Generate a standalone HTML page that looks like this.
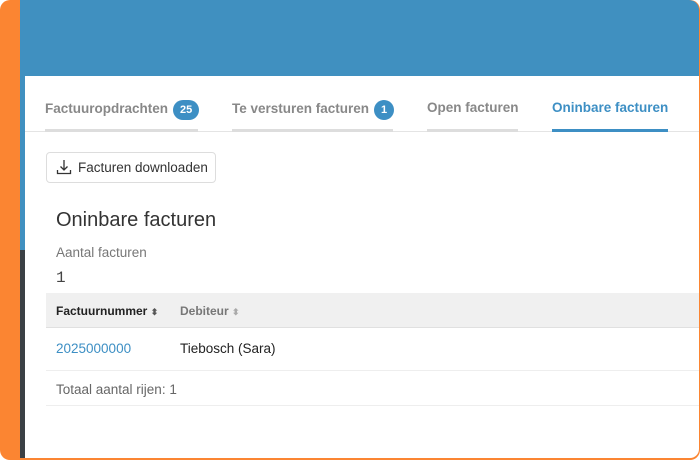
<!DOCTYPE html>
<html><head><style>
*{margin:0;padding:0;box-sizing:border-box}
body{width:700px;height:460px;background:#fff;font-family:"Liberation Sans",sans-serif;position:relative;overflow:hidden}
.frame{position:absolute;inset:0;background:#fb8532;border-radius:10px;overflow:hidden}
.blue{position:absolute;left:20px;top:0;right:1px;height:250px;background:#4090c0;border-top-right-radius:10px}
.dark{position:absolute;left:20px;top:250px;width:6px;bottom:2px;background:#3b4045}
.panel{position:absolute;left:25px;top:76px;right:1px;bottom:2px;background:#fff;border-bottom-right-radius:9px}
.tabs{position:absolute;left:0;top:0;right:0;height:56px;border-bottom:1px solid #e4e4e4}
.tab{position:absolute;top:0;height:56px;font-weight:bold;font-size:13.5px;color:#888;padding-top:24px;border-bottom:3px solid #ddd;white-space:nowrap}
.tab.act{color:#3d8fc4;border-bottom-color:#3d8fc4}
.badge{display:inline-block;background:#3d8fc4;color:#fff;border-radius:10px;font-size:11px;height:20px;line-height:20px;padding:0 7px;vertical-align:0;margin-left:5px}
.btn{position:absolute;left:21px;top:76px;width:170px;height:31px;border:1px solid #ddd;border-radius:4px;font-size:13.5px;color:#333;padding:7px 0 0 31px;white-space:nowrap}
.btn svg{position:absolute;left:9px;top:6px}
h1{position:absolute;left:31px;top:133px;font-size:20px;font-weight:normal;color:#333}
.lbl{position:absolute;left:31px;top:169px;font-size:13.5px;color:#777}
.num{position:absolute;left:31px;top:193px;font-size:16px;color:#444;font-family:"Liberation Mono",monospace}
.th{position:absolute;left:21px;right:0;top:217px;height:35px;background:#f0f0f0;border-bottom:1px solid #e0e0e0;font-size:12px;font-weight:bold}
.row{position:absolute;left:21px;right:0;top:252px;height:43px;border-bottom:1px solid #eee;font-size:13.5px}
.foot{position:absolute;left:21px;right:0;top:295px;height:35px;border-bottom:1px solid #eee;font-size:13.5px;color:#666}
.c{position:absolute;white-space:nowrap}
.s{color:#aaa;font-size:9px}
</style></head><body>
<div class="frame">
<div class="blue"></div>
<div class="dark"></div>
<div class="panel">
<div class="tabs">
<div class="tab" style="left:20px;width:153px">Factuuropdrachten<span class="badge">25</span></div>
<div class="tab" style="left:207px;width:161px">Te versturen facturen<span class="badge" style="padding:0 7px">1</span></div>
<div class="tab" style="left:402px;width:91px">Open facturen</div>
<div class="tab act" style="left:527px;width:116px">Oninbare facturen</div>
</div>
<div class="btn"><svg width="16" height="16" viewBox="0 0 16 16" fill="none" stroke="#333" stroke-width="1.3"><path d="M8 1v10M4.5 7.5l3.5 3.5 3.5-3.5M1.5 11v3.5h13v-3.5"/></svg>Facturen downloaden</div>
<h1>Oninbare facturen</h1>
<div class="lbl">Aantal facturen</div>
<div class="num">1</div>
<div class="th"><span class="c" style="left:10px;top:11px;color:#222">Factuurnummer <span class="s" style="color:#555">⬍</span></span><span class="c" style="left:134px;top:11px;color:#777">Debiteur <span class="s">⬍</span></span></div>
<div class="row"><span class="c" style="left:10px;top:13px;color:#3d8fc4">2025000000</span><span class="c" style="left:134px;top:13px;color:#222">Tiebosch (Sara)</span></div>
<div class="foot"><span class="c" style="left:10px;top:11px">Totaal aantal rijen: 1</span></div>
</div>
</div>
</body></html>
